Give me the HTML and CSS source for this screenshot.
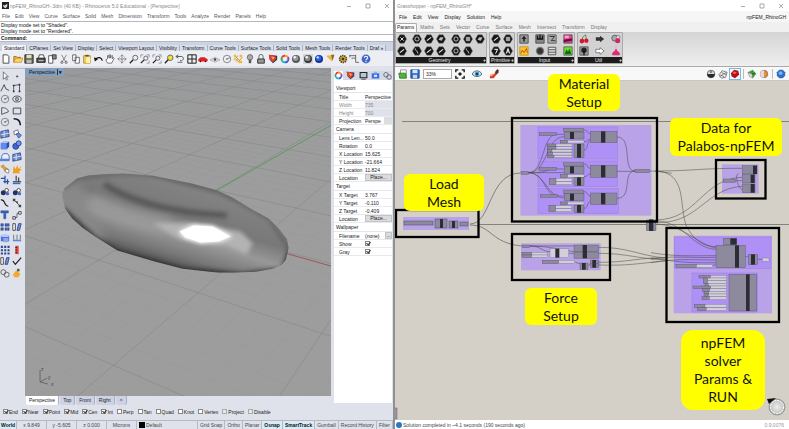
FILE: index.html
```html
<!DOCTYPE html>
<html lang="en">
<head>
<meta charset="utf-8">
<title>npFEM_RhinoGH</title>
<link rel="stylesheet" href="styles.css">
</head>
<body>
<svg class="defs" aria-hidden="true">
  <symbol id="new" viewBox="0 0 12 12"><path d="M2.500 1h5l2 2v8h-7z" fill="#fff" stroke="#333"/></symbol>
  <symbol id="open" viewBox="0 0 12 12"><path d="M1 10V3h3l1 1h4v2" fill="#f3c24a" stroke="#9a6a10"/><path d="M1 10l2-5h9l-2 5z" fill="#ffd45e" stroke="#a8761a" stroke-width=".7"/></symbol>
  <symbol id="save" viewBox="0 0 12 12"><path d="M1 1h10v10H1z" fill="#666b50" stroke="#222"/><path d="M3 1h6v4H3z" fill="#dfe2c0"/><path d="M3 7h6v4H3z" fill="#bbb"/></symbol>
  <symbol id="print" viewBox="0 0 12 12"><path d="M3 5l1-4h5l1 4" fill="#fff" stroke="#333"/><path d="M1 5h10v5H1z" fill="#555" stroke="#111"/><path d="M3 8h6" stroke="#ddd"/></symbol>
  <symbol id="props" viewBox="0 0 12 12"><path d="M2 2h5v9H2z" fill="#fff" stroke="#444"/><path d="M6 1h5v5H7z" fill="#888" stroke="#333"/></symbol>
  <symbol id="cut" viewBox="0 0 12 12"><path d="M3 1l5 8M9 1L4 9" stroke="#777" fill="none"/><circle cx="3.500" cy="10" r="1.300" fill="none" stroke="#555"/><circle cx="8.500" cy="10" r="1.300" fill="none" stroke="#555"/></symbol>
  <symbol id="copy" viewBox="0 0 12 12"><path d="M2 1h4v7H2zM5 4h5v7H5z" fill="#fff" stroke="#555"/></symbol>
  <symbol id="paste" viewBox="0 0 12 12"><path d="M2 2h8v9H2z" fill="#f6cf4a" stroke="#b08820"/><path d="M4 1h4v2H4z" fill="#555"/><path d="M5 4h5v7H5z" fill="#fff4b0"/></symbol>
  <symbol id="undo" viewBox="0 0 12 12"><path d="M2 6c3-3 7-2 8 2" stroke="#111" stroke-width="1.500" fill="none"/><path d="M0 4l1 5 4-3z" fill="#111"/></symbol>
  <symbol id="hand" viewBox="0 0 12 12"><path d="M3 11L1 7l2-1V2h1.500l.5 3V1h1.500v4L8 2h1l-.5 4L10 4l1 1-3 6z" fill="#fff" stroke="#444" stroke-width=".8"/></symbol>
  <symbol id="move" viewBox="0 0 12 12"><path d="M6 1v10M1 6h10M4 3l2-2 2 2M4 9l2 2 2-2M3 4L1 6l2 2M9 4l2 2-2 2" fill="none" stroke="#666" stroke-width=".8"/></symbol>
  <symbol id="zoom" viewBox="0 0 12 12"><circle cx="7.500" cy="4.500" r="3" fill="#eef" stroke="#555"/><path d="M5 7l-4 4" stroke="#222" stroke-width="1.600"/></symbol>
  <symbol id="zoomw" viewBox="0 0 12 12"><path d="M1 4V1h3M8 1h3v3M11 8v3H8" fill="none" stroke="#777" stroke-width=".8"/><circle cx="7" cy="5" r="2.500" fill="#eef" stroke="#555"/><path d="M5 7l-4 4" stroke="#222" stroke-width="1.500"/></symbol>
  <symbol id="zoomy" viewBox="0 0 12 12"><circle cx="7.500" cy="4.500" r="3.300" fill="#f5df3a" stroke="#555"/><path d="M5 7l-4 4" stroke="#222" stroke-width="1.600"/></symbol>
  <symbol id="back" viewBox="0 0 12 12"><path d="M2 3h6c4 1 2 6-2 5M4 1L1 3l3 2" fill="none" stroke="#444"/><path d="M3 10h6" stroke="#555"/></symbol>
  <symbol id="four" viewBox="0 0 12 12"><path d="M1 1h10v10H1zM6 1v10M1 6h10" fill="none" stroke="#222" stroke-width="1.200"/></symbol>
  <symbol id="car" viewBox="0 0 12 12"><path d="M0 7l3-3h5l4 3-1 2H1z" fill="#d8232a"/><circle cx="3" cy="9" r="1" fill="#500"/><circle cx="9" cy="9" r="1" fill="#500"/></symbol>
  <symbol id="cplane" viewBox="0 0 12 12"><path d="M0 7l6-3 6 3-6 3z" fill="#ddd" stroke="#888" stroke-width=".6"/><circle cx="6" cy="6.500" r="1.500" fill="#444"/></symbol>
  <symbol id="circ" viewBox="0 0 12 12"><circle cx="6" cy="6" r="4.500" fill="none" stroke="#777"/><circle cx="6" cy="6" r="1" fill="#555"/><path d="M6 6l4-2" stroke="#777"/></symbol>
  <symbol id="curves" viewBox="0 0 12 12"><path d="M2 2l8 8M1 7l5-5M6 10l5-6" stroke="#b5862a" fill="none"/><path d="M1 1h3v3H1zM8 1h3v3H8zM7 8h4v3H7zM3 6h3v3H3z" fill="#f5b63a"/></symbol>
  <symbol id="bulb" viewBox="0 0 12 12"><circle cx="6" cy="4" r="3.300" fill="#aaa" stroke="#666"/><path d="M4.500 7h3v4h-3z" fill="#555"/></symbol>
  <symbol id="lock" viewBox="0 0 12 12"><path d="M3.500 6V3a2.500 2.500 0 015 0v3" fill="none" stroke="#555"/><path d="M2 6h8v5H2z" fill="#999" stroke="#222"/></symbol>
  <symbol id="wedge" viewBox="0 0 12 12"><path d="M1 1l10 1v5L6 11 2 7z" fill="#343b52"/><path d="M1 1l7 1 2 3-4 5-4-4z" fill="#e2412b"/><path d="M4 3l4 1-2 3z" fill="#ffb06a"/></symbol>
  <symbol id="wheel" viewBox="0 0 12 12"><g fill="none" stroke-width="2.400"><path d="M6 2A4 4 0 019.500 4" stroke="#f4a11e"/><path d="M9.500 4A4 4 0 019.500 8" stroke="#9a3bc0"/><path d="M9.500 8A4 4 0 016 10" stroke="#2f5fe0"/><path d="M6 10A4 4 0 012.500 8" stroke="#24b8c8"/><path d="M2.500 8A4 4 0 012.500 4" stroke="#33b04a"/><path d="M2.500 4A4 4 0 016 2" stroke="#e83c3c"/></g></symbol>
  <symbol id="ball" viewBox="0 0 12 12"><circle cx="6" cy="6" r="4.800" fill="#555"/><circle cx="5.500" cy="5" r="3.300" fill="#999"/><circle cx="4.500" cy="4" r="1.500" fill="#eee"/></symbol>
  <symbol id="balld" viewBox="0 0 12 12"><path d="M0 0h12v12H0z" fill="#d2d4d8"/><circle cx="6" cy="6" r="4.800" fill="#333"/><circle cx="5.500" cy="5" r="3.500" fill="#888"/><circle cx="4.500" cy="4" r="1.500" fill="#f4f4f4"/></symbol>
  <symbol id="ballb" viewBox="0 0 12 12"><circle cx="6" cy="6" r="4.800" fill="#12309a"/><circle cx="5.500" cy="5" r="3.300" fill="#2f62d6"/><circle cx="4.500" cy="4" r="1.400" fill="#cfe0ff"/></symbol>
  <symbol id="cone" viewBox="0 0 12 12"><path d="M0 2l10-1-3 8z" fill="#f0b63a"/><path d="M6 1l4 0-2 7z" fill="#864"/></symbol>
  <symbol id="gear" viewBox="0 0 12 12"><circle cx="6" cy="6" r="4.200" fill="#c9a23c" stroke="#4c3c18" stroke-width="1.800" stroke-dasharray="1.600 1"/><circle cx="6" cy="6" r="1.600" fill="#3b3422"/></symbol>
  <symbol id="dims" viewBox="0 0 12 12"><path d="M1 2h7M1 1v3M8 1v9h4M3 5h5" fill="none" stroke="#555"/></symbol>
  <symbol id="help" viewBox="0 0 12 12"><circle cx="6" cy="6" r="5.300" fill="#3f66cf"/><path d="M4 4.500c0-2.500 4-2.500 4 0C8 6 6 6 6 7.500M6 8.500v1.300" fill="none" stroke="#fff" stroke-width="1.300"/></symbol>

  <symbol id="arrow" viewBox="0 0 12 12"><path d="M4 1v9l2-2 2 3 1-1-2-3h3z" fill="#fff" stroke="#444" stroke-width=".8"/></symbol>
  <symbol id="dot" viewBox="0 0 12 12"><path d="M5 5.500h2.500v2H5z" fill="#555"/></symbol>
  <symbol id="poly" viewBox="0 0 12 12"><path d="M1 10l4-8 2 5 4 2" fill="none" stroke="#333"/></symbol>
  <symbol id="ctrl" viewBox="0 0 12 12"><path d="M2 10V3l7-1v8" fill="none" stroke="#444"/><path d="M1 2h2v2H1zM8 1h2v2H8zM1 9h2v2H1zM8 9h2v2H8z" fill="#333"/></symbol>
  <symbol id="ell" viewBox="0 0 12 12"><ellipse cx="6" cy="6" rx="5" ry="3.600" fill="none" stroke="#444"/><path d="M4.500 4.500h3v3h-3z" fill="none" stroke="#444"/></symbol>
  <symbol id="arc" viewBox="0 0 12 12"><path d="M2 2c5 0 8 2 8 5L2 10z" fill="none" stroke="#444"/></symbol>
  <symbol id="rect" viewBox="0 0 12 12"><path d="M1.500 2.500h9v7h-9z" fill="none" stroke="#333"/></symbol>
  <symbol id="fillet" viewBox="0 0 12 12"><path d="M2 2c5 0 8 3 8 8" fill="none" stroke="#111" stroke-width="1.800"/></symbol>
  <symbol id="surf" viewBox="0 0 12 12"><path d="M1 3l9-2 1 8-10 2z" fill="#6d8ed2" stroke="#33447c"/><path d="M5 2v8M1 7l10-2" stroke="#e4ecff"/></symbol>
  <symbol id="surf2" viewBox="0 0 12 12"><path d="M2 3l5-2 1 4-5 2z" fill="#fff" stroke="#444" stroke-width=".8"/><path d="M5 6c3-2 6 0 6 2l-3 3z" fill="#6d8ed2" stroke="#33447c" stroke-width=".8"/></symbol>
  <symbol id="box" viewBox="0 0 12 12"><path d="M1 4l3-2h7v6l-3 3H1z" fill="#2c4fae"/><path d="M1 4h7v7H1z" fill="#5f8af0"/><path d="M1 4l3-2h7L8 4z" fill="#a9c3ff"/></symbol>
  <symbol id="balls" viewBox="0 0 12 12"><circle cx="4.500" cy="7.500" r="3.600" fill="#3c68d8" stroke="#223c84"/><circle cx="8" cy="4" r="3" fill="#6d94ee" stroke="#223c84"/></symbol>
  <symbol id="cage" viewBox="0 0 12 12"><path d="M2 5l2-3h5l2 3v5H2z" fill="#eaf0ff" stroke="#3d5db0"/><path d="M0 8h11v3H0z" fill="#5f82d6"/></symbol>
  <symbol id="orange" viewBox="0 0 12 12"><path d="M1 3l3-2 2 3 4 2-1 4-3-1-2-4z" fill="#f0a628" stroke="#8a6a2a" stroke-width=".6"/><path d="M7 6l4 1-1 4-4-2z" fill="#fff" stroke="#555" stroke-width=".7"/></symbol>
  <symbol id="burst" viewBox="0 0 12 12"><path d="M1 11l1-9 2 4 3-5v5l5-4-3 4 3 1-4 2 2 2z" fill="#f49c1c"/></symbol>
  <symbol id="trim" viewBox="0 0 12 12"><path d="M1 4h5M6 1v9M4 8h7M9 5v6" fill="none" stroke="#2b4ea8" stroke-width="1.500"/></symbol>
  <symbol id="split" viewBox="0 0 12 12"><path d="M5 1v6M1 8h10M8 3v5" fill="none" stroke="#333" stroke-width="1.300"/><path d="M1 9h9v2H1z" fill="#426acb"/></symbol>
  <symbol id="circs" viewBox="0 0 12 12"><circle cx="4" cy="7" r="3" fill="#26325e"/><circle cx="8" cy="4" r="2.200" fill="#fff" stroke="#333"/><circle cx="9" cy="8" r="2" fill="#4668c8"/></symbol>
  <symbol id="crv" viewBox="0 0 12 12"><path d="M1 2c7 0 2 7 9 8" fill="none" stroke="#111" stroke-width="1.300"/></symbol>
  <symbol id="link" viewBox="0 0 12 12"><path d="M2 2l8 8" stroke="#444"/><path d="M1 1h3v3H1zM8 8h3v3H8zM5 4h2v2H5z" fill="#444"/></symbol>
  <symbol id="tee" viewBox="0 0 12 12"><path d="M1 1h9v2.500H7v7H4.500v-7H1z" fill="#3d63c8" stroke="#20356e" stroke-width=".5"/></symbol>
  <symbol id="pts" viewBox="0 0 12 12"><path d="M2 9h4V4h4" fill="none" stroke="#555"/><path d="M1 8h3v3H1zM8 2h3v3H8z" fill="#fff" stroke="#333"/></symbol>
  <symbol id="arr" viewBox="0 0 12 12"><path d="M1 2h3v3H1zM1 7h3v3H1zM6 2h5v3H6zM6 7h2v3H6zM9 7h2v3H9z" fill="#4267c4" stroke="#1d2c5c" stroke-width=".5"/></symbol>
  <symbol id="mir" viewBox="0 0 12 12"><path d="M1 2h3v8H1z" fill="#fff" stroke="#333"/><path d="M6 10l2-8h3l-2 8z" fill="#6f93e8" stroke="#26407c"/></symbol>
  <symbol id="cyl" viewBox="0 0 12 12"><path d="M1 3h10v7H1z" fill="#4a74dc"/><ellipse cx="6" cy="3" rx="5" ry="1.800" fill="#b6caff"/><path d="M4 6h6v5H4z" fill="#8ba8ec"/></symbol>
  <symbol id="ups" viewBox="0 0 12 12"><path d="M2 8V2M6 8V2M10 8V2" stroke="#666"/><path d="M1 8h10v2H1z" fill="#5f88e0"/></symbol>
  <symbol id="grid9" viewBox="0 0 12 12"><path d="M1 1h2.500v2.500H1zM5 1h2.500v2.500H5zM9 1h2.500v2.500H9zM1 5h2.500v2.500H1zM5 5h2.500v2.500H5zM9 5h2.500v2.500H9zM1 9h2.500v2.500H1zM5 9h2.500v2.500H5zM9 9h2.500v2.500H9z" fill="#2c4690"/></symbol>
  <symbol id="meas" viewBox="0 0 12 12"><path d="M4 1h4v10H4z" fill="#d44"/><path d="M4 3h2M4 6h2M4 9h2" stroke="#222"/></symbol>
  <symbol id="check" viewBox="0 0 12 12"><path d="M1 6l3 4 7-8" fill="none" stroke="#222" stroke-width="1.500"/></symbol>
  <symbol id="gears" viewBox="0 0 12 12"><circle cx="4" cy="5" r="3" fill="none" stroke="#555"/><circle cx="8" cy="8" r="3" fill="none" stroke="#555"/></symbol>
  <symbol id="lampy" viewBox="0 0 12 12"><path d="M1 8l4-5 5 4-2 4H3z" fill="#f2a92c"/><path d="M6 1h3v3H6z" fill="#555"/></symbol>

  <symbol id="hex" viewBox="0 0 12 12"><path d="M3.500 1h5L11.500 6l-3 5h-5L.5 6z" fill="#161616" stroke="#666" stroke-width=".5"/></symbol>
  <symbol id="hx" viewBox="0 0 12 12"><use href="#hex"/><path d="M4 4l4 4M8 4L4 8" stroke="#fff"/></symbol>
  <symbol id="hcirc" viewBox="0 0 12 12"><use href="#hex"/><circle cx="6" cy="6" r="2.500" fill="none" stroke="#ddd"/></symbol>
  <symbol id="hplane" viewBox="0 0 12 12"><use href="#hex"/><path d="M3 7l2-3h4L7 8z" fill="#bbb"/></symbol>
  <symbol id="hbox" viewBox="0 0 12 12"><use href="#hex"/><path d="M4 4h4v4H4zM6 4v4M4 6h4" fill="#555" stroke="#ddd" stroke-width=".8"/></symbol>
  <symbol id="hline" viewBox="0 0 12 12"><use href="#hex"/><path d="M3.500 8l5-4" stroke="#eee" stroke-width="1.400"/></symbol>
  <symbol id="hcurve" viewBox="0 0 12 12"><use href="#hex"/><path d="M4 3c0 4 2 1 3 6" fill="none" stroke="#eee"/></symbol>
  <symbol id="hseven" viewBox="0 0 12 12"><use href="#hex"/><path d="M4 4h4L5.500 9" fill="none" stroke="#fff" stroke-width="1.200"/></symbol>
  <symbol id="ha" viewBox="0 0 12 12"><use href="#hex"/><path d="M4 9l2-6 2 6M5 7h2" fill="none" stroke="#fff" stroke-width="1.200"/></symbol>
  <symbol id="up" viewBox="0 0 12 12"><path d="M1 1h10v10H1z" fill="#999" stroke="#444"/><path d="M6 2l3 4H7v3H5V6H3z" fill="#222"/></symbol>
  <symbol id="disk" viewBox="0 0 12 12"><path d="M1 1h10v10H1z" fill="#888" stroke="#444"/><path d="M3 2v4h6V2M6 1v4" fill="none" stroke="#111" stroke-width="1.600"/></symbol>
  <symbol id="slid" viewBox="0 0 12 12"><path d="M1 1h10v10H1z" fill="#aaa" stroke="#555"/><path d="M3 3h6L5 8h5" fill="none" stroke="#222"/></symbol>
  <symbol id="pink" viewBox="0 0 12 12"><path d="M1 1h10v10H1z" fill="#e9408f" stroke="#555"/><path d="M1 7l10-2v3L1 10z" fill="#6a1040"/><path d="M2 2h5v3H2z" fill="#f9a4cc"/></symbol>
  <symbol id="graph" viewBox="0 0 12 12"><path d="M1 1h10v10H1z" fill="#f8c62c" stroke="#c89010"/><path d="M2 9l2-4 2 3 3-5 1 5" fill="none" stroke="#c03a10"/></symbol>
  <symbol id="blob" viewBox="0 0 12 12"><circle cx="6" cy="6" r="5" fill="#777"/><circle cx="6" cy="6" r="3.500" fill="#333"/></symbol>
  <symbol id="list" viewBox="0 0 12 12"><path d="M1.500 1.500h9v9h-9zM2 4.500h8M2 7.500h8" fill="#ddd" stroke="#444"/></symbol>
  <symbol id="green" viewBox="0 0 12 12"><path d="M1 1h10v10H1z" fill="#6ee02c" stroke="#555"/><path d="M2 10l2-6 2 3 2-4 2 7z" fill="#0e6a1a"/></symbol>
  <symbol id="cherry" viewBox="0 0 12 12"><path d="M4 7c0-4 2-5 4-6 0 3 1 4 1 6" fill="none" stroke="#2a8a2a"/><circle cx="3.500" cy="8.500" r="2.800" fill="#dc1030"/><circle cx="8.800" cy="8" r="2.600" fill="#dc1030"/></symbol>
  <symbol id="tree" viewBox="0 0 12 12"><path d="M1 1h10v10H1z" fill="#999" stroke="#555"/><circle cx="6" cy="5" r="3.300" fill="#222"/><path d="M6 5v6" stroke="#111" stroke-width="1.500"/></symbol>
  <symbol id="arf" viewBox="0 0 12 12"><path d="M1 4h5V2l5 4-5 4V8H1z" fill="#333"/></symbol>
  <symbol id="aro" viewBox="0 0 12 12"><path d="M1 4h5V2l5 4-5 4V8H1z" fill="#fff" stroke="#555" stroke-width=".8"/></symbol>
  <symbol id="magb" viewBox="0 0 12 12"><circle cx="4.500" cy="5" r="3.600" fill="#aaa" stroke="#555"/><circle cx="8.500" cy="4" r="2.300" fill="#ddd" stroke="#777"/><circle cx="8" cy="8" r="3" fill="#d8206a"/></symbol>
  <symbol id="flask" viewBox="0 0 12 12"><path d="M5 1h2v4l4 4-1 2H2L1 9l4-4z" fill="#e0287a"/><path d="M5 1h2v3H5z" fill="#f7c6dc"/></symbol>

  <symbol id="gopen" viewBox="0 0 12 12"><path d="M3 1h7v9H3z" fill="#fff" stroke="#888"/><path d="M1 5h8l1 6H2z" fill="#4fb53c" stroke="#2a7a22"/></symbol>
  <symbol id="gsave" viewBox="0 0 12 12"><path d="M1 1h10v10H1z" fill="#2d6fd0" stroke="#1a3f8c"/><path d="M3 1h6v4H3z" fill="#d5e6ff"/><path d="M3.500 7h5v4h-5z" fill="#cfd6e0"/></symbol>
  <symbol id="focus" viewBox="0 0 12 12"><path d="M1 4V1h3M8 1h3v3M11 8v3H8M4 11H1V8" fill="none" stroke="#111" stroke-width="1.600"/><path d="M6 3.500L8.500 6 6 8.500 3.500 6z" fill="#222"/></symbol>
  <symbol id="eye" viewBox="0 0 12 12"><path d="M0 6c3-5 9-5 12 0-3 4-9 4-12 0z" fill="#cfe4f0" stroke="#2c5468"/><circle cx="6" cy="6" r="2.600" fill="#3f90b8"/><circle cx="6" cy="6" r="1.200" fill="#0c2430"/></symbol>
  <symbol id="pen" viewBox="0 0 12 12"><path d="M1 11c0-4 2-4 4-4l5-5 2 2-5 5c-1 3-4 2-6 2z" fill="#d83a26"/><path d="M7 4l3-4 2 2-3 4z" fill="#3a3a3a"/><path d="M1 7l3-2 1 2-2 2z" fill="#f0b0a0"/></symbol>
  <symbol id="half" viewBox="0 0 12 12"><circle cx="6" cy="6" r="4.500" fill="#ddd" stroke="#555"/><path d="M1.500 6h9a4.500 4.500 0 01-9 0z" fill="#2c2c2c"/><circle cx="6" cy="3.500" r="1.500" fill="#888"/></symbol>
  <symbol id="wire" viewBox="0 0 12 12"><path d="M1 7l4-5 6 2-2 6-5 1zM4 4l6 3M3 7l5 3M2 9l8-5" fill="#eee" stroke="#555" stroke-width=".8"/></symbol>
  <symbol id="red" viewBox="0 0 12 12"><path d="M1 5l4-4 5 1 1 5-5 4-4-2z" fill="#b51313"/><path d="M3 5l2-2 3 1-2 2z" fill="#f26a5a"/></symbol>
  <symbol id="gball" viewBox="0 0 12 12"><path d="M1 4l6-3 4 5-4 5z" fill="#43a03a"/><path d="M1 4l5 2 1 5-4-2z" fill="#dcdcdc" stroke="#555" stroke-width=".5"/><path d="M6 6l4-1" stroke="#174a14"/></symbol>
  <symbol id="oball" viewBox="0 0 12 12"><circle cx="6" cy="6" r="4.500" fill="#f08a34" stroke="#555" stroke-width=".7"/><path d="M6 1.500a4.500 4.500 0 000 9z" fill="#ddd"/></symbol>
  <symbol id="bbox" viewBox="0 0 12 12"><path d="M4 1h4l3 3v4l-3 3H4L1 8V4z" fill="#2f6fc4"/><path d="M4 3h3l1 2-1 2H4L3 5z" fill="#7db4f0"/></symbol>
  <symbol id="screen" viewBox="0 0 12 12"><path d="M1.500 2h9v7h-9z" fill="#b8c6d0" stroke="#222" stroke-width="1.400"/><path d="M3 11h6" stroke="#333"/></symbol>
  <symbol id="bag" viewBox="0 0 12 12"><path d="M1 3h10v7H1z" fill="#3f6fe0"/><path d="M4 1h4v2H4z" fill="#89a9f0"/><path d="M4 5h4v3H4z" fill="#d6e2ff"/></symbol>
</svg>

<main class="desktop">
  <section class="win rhino" aria-label="Rhinoceros">
    <header class="title">
      <svg class="logo" viewBox="0 0 8 8"><path d="M0 0h8v8H0z" fill="#222"/><path d="M1 3l2 1 3-2v3L4 7 2 6z" fill="#ddd"/></svg>
      <span>npFEM_RhinoGH-.3dm (40 KB) - Rhinoceros 5.0 Educational - [Perspective]</span>
      <div class="sys"><button aria-label="Minimize"><svg viewBox="0 0 6 6"><path d="M1 3.500h4"/></svg></button><button aria-label="Maximize"><svg viewBox="0 0 6 6"><path d="M1 1h4v4H1z"/></svg></button><button aria-label="Close"><svg viewBox="0 0 6 6"><path d="M1 1l4 4M5 1L1 5"/></svg></button></div>
    </header>
    <nav class="menu"><a href="#">File</a><a href="#">Edit</a><a href="#">View</a><a href="#">Curve</a><a href="#">Surface</a><a href="#">Solid</a><a href="#">Mesh</a><a href="#">Dimension</a><a href="#">Transform</a><a href="#">Tools</a><a href="#">Analyze</a><a href="#">Render</a><a href="#">Panels</a><a href="#">Help</a></nav>
    <div class="history"><p>Display mode set to "Shaded".</p><p>Display mode set to "Rendered".</p></div>
    <div class="command"><label for="cmd">Command:</label><input id="cmd" type="text"></div>
    <nav class="tabs"><a href="#" class="on">Standard</a><a href="#">CPlanes</a><a href="#">Set View</a><a href="#">Display</a><a href="#">Select</a><a href="#">Viewport Layout</a><a href="#">Visibility</a><a href="#">Transform</a><a href="#">Curve Tools</a><a href="#">Surface Tools</a><a href="#">Solid Tools</a><a href="#">Mesh Tools</a><a href="#">Render Tools</a><a href="#">Draf »</a></nav>
    <div class="bar" data-icons="new open save print props cut copy paste undo hand move zoom zoomw zoomw zoomy back four car cplane circ curves bulb lock wedge wheel ball balld ballb cone gear dims help"></div>
    <div class="work">
      <div class="side" data-icons="arrow dot poly ctrl circ ell arc rect circ fillet surf surf2 box balls cage surf orange burst trim split circs circs crv link tee pts arr mir cyl ups grid9 meas mir check gears lampy"></div>
      <div class="center">
        <div class="viewport">
          <svg class="scene" viewBox="25 68 305 328" preserveAspectRatio="xMinYMin slice">
            <defs>
              <linearGradient id="body" gradientUnits="userSpaceOnUse" x1="190" y1="178" x2="163" y2="268"><stop offset="0" stop-color="#707070"/><stop offset=".12" stop-color="#828282"/><stop offset=".42" stop-color="#787878"/><stop offset=".62" stop-color="#989898"/><stop offset=".82" stop-color="#777"/><stop offset="1" stop-color="#444"/></linearGradient>
              <filter id="b2" x="-50%" y="-50%" width="200%" height="200%"><feGaussianBlur stdDeviation="2"/></filter>
              <filter id="b5" x="-50%" y="-50%" width="200%" height="200%"><feGaussianBlur stdDeviation="5"/></filter>
              <clipPath id="shape"><path id="hull" d="M62 195L64 188 77 178 88 175 100 174 123 173 153 175.500 192 183 217 190 232 197 250 208 268 218 278 228 286 238 288 247 285 259 281 264 272 268 255 271 235 272 218 272 200 270 182 268 155 261 117 250 106 243 95 236 82 227 72 218 65 208z"/></clipPath>
            </defs>
            <g id="gridlines"></g>
            <path d="M216 190L332 124" stroke="#4b9b4b" stroke-width=".8"/><path d="M286 253L332 266" stroke="#a04444" stroke-width=".8"/>
            <g clip-path="url(#shape)">
              <use href="#hull" fill="url(#body)"/>
              <path d="M58 180l20 0 8 20 20 40-12 10-36-40z" fill="#888" filter="url(#b5)"/>
              <path d="M104 184C120 194 150 208 200 213l26 2" fill="none" stroke="#505050" stroke-width="6" opacity=".8" filter="url(#b2)"/>
              <path d="M90 200C120 215 140 222 170 224" fill="none" stroke="#9a9a9a" stroke-width="12" filter="url(#b5)"/>
              <path d="M152 223l36-1 52 9 12 12-6 11-20-8-48-8z" fill="#b8b8b8" opacity=".9" filter="url(#b2)"/>
              <path d="M178 231l15-7 19 1 20 11-12 5-20 2-16-5z" fill="#fff" filter="url(#b2)"/>
              <path d="M179 231l14-6 19 1 18 10-12 5-18 1-15-5z" fill="#fff"/>
              <path d="M62 208l33 30 22 13 65 18 60 5 40-5 8-20" fill="none" stroke="#2c2c2c" stroke-width="4" filter="url(#b2)"/>
              <path d="M64 188l13-10 46-5 30 2 64 15 51 28 20 30" fill="none" stroke="#444" stroke-width="1.500" filter="url(#b2)"/>
            </g>
            <g fill="none" stroke="#555" stroke-width=".7"><path d="M40 381v-12M40 381l7-4M40 381l8 2"/></g>
            <g class="axis"><text x="41" y="370">z</text><text x="48" y="378">y</text><text x="51" y="385">x</text></g>
          </svg>
          <button class="vpname">Perspective <b>▾</b></button>
        </div>
        <nav class="vptabs"><a href="#" class="on">Perspective</a><a href="#">Top</a><a href="#">Front</a><a href="#">Right</a><a href="#">✧</a></nav>
      </div>
      <form class="panel">
        <div class="ptabs" data-icons="wheel wedge screen bag gears"></div>
        <div class="pbody">
          <h2>Viewport</h2>
          <div class="row"><label for="f1">Title</label><input id="f1" value="Perspective"></div>
          <div class="row off"><label for="f2">Width</label><input id="f2" value="735" disabled></div>
          <div class="row off"><label for="f3">Height</label><input id="f3" value="700" disabled></div>
          <div class="row"><label for="f4">Projection</label><select id="f4"><option>Perspe</option></select></div>
          <h2>Camera</h2>
          <div class="row"><label for="f5">Lens Len...</label><input id="f5" value="50.0"></div>
          <div class="row"><label for="f6">Rotation</label><input id="f6" value="0.0"></div>
          <div class="row"><label for="f7">X Location</label><input id="f7" value="15.625"></div>
          <div class="row"><label for="f8">Y Location</label><input id="f8" value="-21.664"></div>
          <div class="row"><label for="f9">Z Location</label><input id="f9" value="11.824"></div>
          <div class="row"><span>Location</span><button type="button">Place...</button></div>
          <h2>Target</h2>
          <div class="row"><label for="f10">X Target</label><input id="f10" value="3.767"></div>
          <div class="row"><label for="f11">Y Target</label><input id="f11" value="-0.110"></div>
          <div class="row"><label for="f12">Z Target</label><input id="f12" value="-0.409"></div>
          <div class="row"><span>Location</span><button type="button">Place...</button></div>
          <h2>Wallpaper</h2>
          <div class="row file"><label for="f13">Filename</label><input id="f13" value="(none)"><button type="button">...</button></div>
          <div class="row"><label for="f14">Show</label><input id="f14" type="checkbox" checked></div>
          <div class="row"><label for="f15">Gray</label><input id="f15" type="checkbox" checked></div>
        </div>
      </form>
    </div>
    <div class="osnap">
      <label><input type="checkbox" checked>End</label><label><input type="checkbox" checked>Near</label><label><input type="checkbox" checked>Point</label><label><input type="checkbox" checked>Mid</label><label><input type="checkbox" checked>Cen</label><label><input type="checkbox" checked>Int</label><label><input type="checkbox">Perp</label><label><input type="checkbox">Tan</label><label><input type="checkbox">Quad</label><label><input type="checkbox">Knot</label><label><input type="checkbox">Vertex</label><label><input type="checkbox" disabled>Project</label><label><input type="checkbox" disabled>Disable</label>
    </div>
    <footer class="status">
      <span class="world">World</span><span class="coord">x 9.849</span><span class="coord">y -5.605</span><span class="coord">z 0.000</span><span class="coord">Microns</span><span class="layer"><i></i>Default</span>
      <button>Grid Snap</button><button>Ortho</button><button>Planar</button><button class="on">Osnap</button><button class="on">SmartTrack</button><button>Gumball</button><button>Record History</button><button>Filter</button>
    </footer>
  </section>

  <section class="win gh" aria-label="Grasshopper">
    <header class="title">
      <span>Grasshopper - npFEM_RhinoGH*</span>
      <div class="sys"><button aria-label="Minimize"><svg viewBox="0 0 6 6"><path d="M1 3.500h4"/></svg></button><button aria-label="Maximize"><svg viewBox="0 0 6 6"><path d="M1 1h4v4H1z"/></svg></button><button aria-label="Close"><svg viewBox="0 0 6 6"><path d="M1 1l4 4M5 1L1 5"/></svg></button></div>
    </header>
    <nav class="menu"><a href="#">File</a><a href="#">Edit</a><a href="#">View</a><a href="#">Display</a><a href="#">Solution</a><a href="#">Help</a><span>npFEM_RhinoGH</span></nav>
    <nav class="gtabs"><a href="#" class="on">Params</a><a href="#">Maths</a><a href="#">Sets</a><a href="#">Vector</a><a href="#">Curve</a><a href="#">Surface</a><a href="#">Mesh</a><a href="#">Intersect</a><a href="#">Transform</a><a href="#">Display</a></nav>
    <div class="ribbon">
      <div class="group"><div class="sets"><div data-icons="hx hline"></div><div data-icons="hcirc hcurve hline hline hplane hline"></div><div data-icons="hcirc hcirc hbox hcurve hplane"></div></div><h2><span>Geometry</span><b>+</b></h2></div>
      <div class="group"><div class="sets"><div data-icons="hline hseven hbox ha"></div></div><h2><span>Primitive</span><b>+</b></h2></div>
      <div class="group wide"><div class="sets"><div data-icons="up graph"></div><div data-icons="disk blob slid list"></div><div data-icons="pink green"></div></div><h2><span>Input</span><b>+</b></h2></div>
      <div class="group wide"><div class="sets"><div data-icons="cherry tree"></div><div data-icons="arf aro"></div><div data-icons="magb flask"></div></div><h2><span>Util</span><b>+</b></h2></div>
    </div>
    <div class="gbar">
      <div data-icons="gopen gsave"></div>
      <select aria-label="Zoom"><option>33%</option></select>
      <div class="drop" data-icons="focus eye pen"></div>
      <div class="right" data-icons="half wire red"></div>
      <div class="cut" data-icons="gball oball"></div>
      <div class="cut" data-icons="bbox"></div>
    </div>
    <div class="canvas">
      <svg class="graph" viewBox="395 81 394 338" preserveAspectRatio="xMinYMin meet">
        <g class="wire">
          <path d="M402 121.500H789M479 224.500H789M470 224C492 224 488 173 521 173M470 225C492 225 490 243 522 246"/>
        </g>
        <g>
          <rect class="g1" x="403" y="217" width="66" height="13"/>
          <g class="fine"><rect class="n" x="404" y="221" width="29" height="4"/><rect class="n" x="435" y="219" width="12" height="9"/><rect class="d" x="440" y="219" width="3" height="9"/><rect class="n" x="449" y="221" width="9" height="7"/><rect class="d" x="452" y="221" width="3" height="7"/><rect class="n" x="460" y="222" width="8" height="4"/></g>
        </g>
        <g transform="translate(505 110) scale(.33333)">
          <rect class="g1" x="46" y="45" width="393" height="272"/>
          <rect class="g2" x="99" y="51" width="239" height="96"/><rect class="g2" x="99" y="153" width="239" height="77"/><rect class="g2" x="99" y="235" width="241" height="76"/>
          <g class="wire w3"><path d="M70 188C120 188 110 73 155 73M70 188C130 190 120 177 155 177M70 188C120 188 120 258 155 258M70 188C130 188 120 80 178 80M70 188H178M70 188C120 188 125 262 178 264M155 73H178M155 177H178M155 258H178M237 60C250 60 245 70 256 72M237 95C250 95 245 88 256 88M237 120C250 120 245 92 256 92M237 162C250 162 245 175 256 175M237 200C250 200 245 192 256 192M237 245C250 245 245 258 256 258M237 295C250 295 245 275 256 275M336 81C385 81 350 183 390 183M336 184H390M336 265C385 265 350 183 390 183M434 183C460 184 460 184 500 190"/></g>
          <rect class="n" x="48" y="184" width="22" height="9"/><rect class="n" x="103" y="68" width="52" height="9"/><rect class="n" x="103" y="172" width="52" height="9"/><rect class="n" x="106" y="254" width="52" height="8"/><rect class="n" x="390" y="178" width="44" height="10"/>
          <g id="rowA"><rect class="n" x="176" y="55" width="60" height="10"/><rect class="n" x="178" y="66" width="59" height="21"/><rect class="d" x="195" y="66" width="12" height="21"/><rect class="l" x="166" y="91" width="71" height="8"/><rect class="n" x="166" y="91" width="22" height="8"/></g>
          <use href="#rowA" y="103"/><use href="#rowA" y="185"/>
          <g class="l"><rect x="127" y="102" width="74" height="7"/><rect x="127" y="110" width="74" height="7"/><rect x="127" y="119" width="74" height="7"/><rect x="127" y="128" width="74" height="7"/><rect x="127" y="136" width="74" height="7"/><rect x="133" y="205" width="68" height="9"/><rect x="133" y="215" width="68" height="9"/><rect x="132" y="287" width="68" height="8"/><rect x="132" y="296" width="68" height="9"/></g>
          <g class="n"><rect x="127" y="102" width="26" height="7"/><rect x="127" y="110" width="26" height="7"/><rect x="127" y="119" width="14" height="7"/><rect x="127" y="128" width="16" height="7"/><rect x="127" y="136" width="20" height="7"/><rect x="133" y="205" width="20" height="19"/><rect x="132" y="287" width="20" height="18"/></g>
          <g class="n"><rect x="207" y="102" width="30" height="41"/><rect x="207" y="202" width="30" height="25"/><rect x="207" y="285" width="30" height="23"/><rect x="256" y="64" width="80" height="34"/><rect x="256" y="166" width="80" height="36"/><rect x="256" y="249" width="80" height="34"/></g>
          <g class="d"><rect x="216" y="102" width="12" height="41"/><rect x="216" y="202" width="12" height="25"/><rect x="216" y="285" width="12" height="23"/><rect x="288" y="64" width="13" height="34"/><rect x="288" y="166" width="13" height="36"/><rect x="288" y="249" width="13" height="34"/></g>
          <rect class="n" x="424" y="330" width="29" height="32"/><rect class="d" x="432" y="328" width="13" height="35"/>
          <rect class="g1" x="48" y="400" width="239" height="81"/>
          <g class="wire w3"><path d="M74 408H207M74 408C110 408 110 425 135 425M74 408C120 408 150 415 207 425M190 430H207M209 456L226 462M250 468L256 460M281 412C370 412 400 436 480 444M281 430C370 430 400 448 480 448M281 457C370 457 400 443 480 443M281 465C370 468 400 460 480 453"/></g>
          <rect class="n" x="51" y="405" width="23" height="8"/><rect class="l" x="51" y="427" width="77" height="15"/><rect class="n" x="51" y="427" width="29" height="15"/><path class="line" d="M51 434.500h77"/>
          <rect class="l" x="135" y="416" width="56" height="27"/><rect class="d" x="151" y="416" width="12" height="27"/>
          <rect class="n" x="207" y="405" width="74" height="20"/><rect class="n" x="207" y="426" width="74" height="19"/><rect class="d" x="233" y="405" width="13" height="40"/>
          <rect class="l" x="113" y="451" width="96" height="9"/><rect class="n" x="113" y="451" width="48" height="9"/><rect class="n" x="225" y="459" width="24" height="20"/><rect class="d" x="231" y="459" width="11" height="20"/><rect class="n" x="256" y="450" width="25" height="23"/><rect class="d" x="262" y="450" width="11" height="23"/><path class="line" d="M256 461h25"/>
        </g>
        <g transform="translate(655 110) scale(.33333)">
          <rect class="g1" x="201" y="163" width="110" height="88"/>
          <rect class="g1" x="56" y="377" width="295" height="233"/><rect class="g2" x="58" y="381" width="290" height="94"/><rect class="g2" x="111" y="489" width="197" height="117"/>
          <g class="wire w3"><path d="M0 183C110 183 150 174 262 175M0 183C100 185 70 290 95 350C120 395 150 410 183 410M0 330C130 330 140 205 262 202M0 337C130 345 150 235 262 229M0 332C90 335 110 415 183 418M0 342C90 345 120 400 183 414M-12 428C60 440 100 437 183 437M-12 448C60 435 100 445 183 442M-12 458C60 445 100 450 183 450M-12 444C60 455 100 460 183 458M172 468L183 462M242 212H262M250 190C235 200 255 240 262 240M271 440H280M308 448H322"/></g>
          <rect class="n" x="262" y="167" width="44" height="25"/><rect class="d" x="294" y="167" width="12" height="25"/><rect class="n" x="262" y="194" width="38" height="25"/><rect class="d" x="287" y="194" width="12" height="25"/><rect class="n" x="262" y="222" width="38" height="26"/><rect class="d" x="287" y="222" width="12" height="26"/><rect class="n" x="205" y="207" width="37" height="10"/>
          <rect class="n" x="205" y="385" width="40" height="19"/><rect class="d" x="226" y="385" width="19" height="19"/><rect class="n" x="183" y="406" width="88" height="67"/><rect class="d" x="240" y="406" width="12" height="67"/><rect class="l" x="63" y="464" width="110" height="8"/><rect class="n" x="63" y="464" width="61" height="8"/><rect class="n" x="280" y="433" width="28" height="31"/><rect class="d" x="288" y="433" width="12" height="31"/><rect class="l" x="322" y="444" width="20" height="10"/>
          <rect class="n" x="222" y="493" width="83" height="110"/><rect class="d" x="273" y="493" width="11" height="110"/>
          <g class="l"><rect x="145" y="496" width="70" height="8"/><rect x="148" y="504" width="67" height="8"/><rect x="148" y="512" width="67" height="8"/><rect x="155" y="520" width="60" height="8"/><rect x="140" y="528" width="75" height="8"/><rect x="155" y="536" width="60" height="8"/><rect x="160" y="544" width="55" height="8"/><rect x="160" y="552" width="55" height="8"/><rect x="155" y="560" width="60" height="9"/><rect x="136" y="583" width="79" height="9"/><rect x="140" y="593" width="75" height="9"/></g>
          <g class="n"><rect x="132" y="496" width="34" height="8"/><rect x="145" y="504" width="13" height="16"/><rect x="150" y="520" width="10" height="8"/><rect x="114" y="528" width="53" height="8"/><rect x="142" y="536" width="22" height="8"/><rect x="147" y="544" width="14" height="8"/><rect x="147" y="552" width="12" height="8"/><rect x="141" y="560" width="22" height="9"/><rect x="118" y="583" width="32" height="9"/><rect x="127" y="593" width="27" height="9"/></g>
        </g>
        <g fill="none" stroke="#000" stroke-width="2.300">
          <rect x="396" y="210" width="82.500" height="27"/><rect x="512" y="118" width="145" height="103.500"/><rect x="512" y="234" width="98" height="46"/><rect x="716" y="160" width="49.500" height="38.500"/><rect x="666.500" y="228" width="112.500" height="94"/>
        </g>
        <radialGradient id="dial"><stop offset="0" stop-color="#eee"/><stop offset="1" stop-color="#bbb"/></radialGradient>
        <circle cx="777" cy="407" r="8" fill="url(#dial)" stroke="#888" stroke-width=".8"/><circle cx="777" cy="407" r="6.500" fill="none" stroke="#fff" stroke-dasharray="2 1"/><path d="M767 399l9-1-6 5-1 1z" fill="#111"/>
        <rect x="394" y="408" width="3" height="11" fill="#999" stroke="#666" stroke-width=".5"/>
      </svg>
      <p class="note material">Material Setup</p>
      <p class="note data">Data for<br>Palabos-npFEM</p>
      <p class="note load">Load Mesh</p>
      <p class="note force">Force Setup</p>
      <p class="note solver">npFEM solver Params &amp; RUN</p>
    </div>
    <footer class="gstatus"><i></i><span>Solution completed in ~4.1 seconds (190 seconds ago)</span><em>0.9.0076</em></footer>
  </section>
</main>
<script src="script.js"></script>
</body>
</html>
```
FILE: styles.css
```css
* { box-sizing: border-box; margin: 0; padding: 0; }
body { font: 5px/6px "Liberation Sans", Arial, sans-serif; color: #222; background: #fff; }
a { color: inherit; text-decoration: none; }
button, input, select { font: inherit; color: inherit; border: 0; background: none; border-radius: 0; appearance: none; min-width: 0; }
h2 { font: inherit; }
.defs { position: absolute; width: 0; height: 0; }
.desktop { display: grid; grid-template-columns: 393fr 396fr; min-height: 100vh; }
.win { display: flex; flex-direction: column; min-width: 0; overflow: hidden; white-space: nowrap; }
.icon { display: block; width: 10px; height: 10px; }
.icon svg { display: block; width: 100%; height: 100%; }

.title { display: flex; align-items: center; height: 11px; padding: 0 3px 0 2px; gap: 1px; color: #888; background: #fff; }
.logo { width: 7px; height: 7px; }
.sys { display: flex; gap: 13px; margin-left: auto; }
.sys svg { display: block; width: 6px; height: 6px; fill: none; stroke: #888; stroke-width: .7; }
.menu { display: flex; align-items: center; gap: 5px; height: 10px; padding: 0 2px; color: #555; background: #fff; }

.rhino { background: #dfe2ea; }
.history { height: 13px; padding: 0 1px; border-top: 1px solid #b4b8c2; background: #fff; color: #111; }
.command { display: flex; height: 8px; padding: 0 1px; border: 1px solid #b4b8c2; border-width: 1px 0; background: #fff; color: #111; font-weight: bold; }
.command input { flex: 1; }
.tabs { display: flex; height: 9px; padding: 3px 0 0 2px; background: #ccd3e2; }
.tabs a { padding: 0 2px; border-right: 1px solid #aab2c6; background: #d8deea; }
.tabs .on { background: #f2f4f8; }
.bar { display: flex; align-items: center; justify-content: space-between; height: 15px; padding: 0 22px 0 1px; background: #eceef3; }
.work { display: flex; flex: 1; padding-top: 2px; min-height: 0; }
.side { display: grid; grid-template-columns: 10px 10px; column-gap: 2px; align-content: space-between; width: 25px; height: 210px; padding-top: 2px; border-top: 1px solid #b6bac6; }
.center { display: flex; flex-direction: column; flex: 1; min-width: 0; }
.viewport { position: relative; flex: 1; min-height: 0; background: #9d9d9d; overflow: hidden; }
.scene { position: absolute; width: 100%; height: 100%; }
.axis { font-size: 5px; fill: #444; }
.vpname { position: absolute; left: 0; top: 0; height: 8px; padding: 0 2px 0 4px; background: #84a0bd; color: #111; }
.vpname b { padding-left: 1px; border-left: 1px solid #333; }
.vptabs { display: flex; gap: 1px; height: 9px; padding-left: 1px; }
.vptabs a { padding: 1px 3px; background: #cdd2e4; border-right: 1px solid #aab0c4; border-radius: 0 0 2px 2px; }
.vptabs .on { background: #fff; }

.panel { display: flex; flex-direction: column; width: 18%; max-width: 62px; margin-bottom: 2px; padding: 3px 1px 0 3px; }
.ptabs { display: flex; justify-content: space-between; height: 9px; background: #d3d9e6; overflow: hidden; }
.ptabs .icon { width: 9px; height: 9px; }
.ptabs .icon:first-child { background: #fff; }
.pbody { flex: 1; padding-top: 4px; background: #fff; }
.pbody h2 { height: 9px; padding: 1px 2px; border-bottom: 1px solid #e4e6ee; }
.row { display: flex; align-items: center; height: 8px; padding-left: 5px; border-bottom: 1px solid #e8eaf0; }
.row label, .row span { flex: 0 0 26px; }
.row input, .row select { flex: 1; width: 10px; height: 7px; }
.row select { background: linear-gradient(90deg, transparent 70%, #ddd 70%); }
.row button { flex: 1; height: 7px; background: #dcdcde; border: 1px solid #c4c4c8; line-height: 5px; }
.row.file button { flex: 0 0 7px; }
.row.off { color: #888; }
.row.off input { background: #dfe2ea; }
.osnap input, .row input[type="checkbox"] { flex: none; width: 5px; height: 5px; border: 1px solid #888; background: #fff; position: relative; }
input[type="checkbox"]:checked::before { content: ""; position: absolute; left: 1px; top: -1px; width: 2px; height: 3px; border: solid #333; border-width: 0 1px 1px 0; transform: rotate(40deg); }
.osnap input:disabled { border-color: #aaa; background: #e8e8e8; }
.osnap { display: flex; align-items: center; gap: 4px; height: 13px; padding-left: 3px; }
.osnap label { display: flex; align-items: center; gap: 1px; }
.status { display: flex; align-items: center; height: 9px; margin-top: 2px; border-top: 1px solid #b6bac6; color: #444; overflow: hidden; }
.status > * { border-right: 1px solid #b6bac6; padding: 0 2px; height: 8px; line-height: 8px; }
.status .world { width: 17px; padding: 0 1px; background: #d8ecf8; color: #111; font-weight: bold; }
.coord { flex: 0 0 30px; text-align: center; }
.layer { display: flex; align-items: center; gap: 1px; flex: 1; }
.layer i { width: 6px; height: 6px; background: #000; }
.status .on { font-weight: bold; color: #111; background: #d8ecf8; }

.gh { background: #f4f4f4; border-left: 2px solid #8e9096; }
.gh .title { padding: 0 5px 0 2px; }
.gh .menu { gap: 6px; height: 11px; padding: 0 3px 0 4px; color: #222; background: #f6f6f6; }
.gh .menu span { margin-left: auto; }
.gtabs { display: flex; height: 10px; padding-top: 1px; color: #777; background: #f0f0f0; }
.gtabs a { padding: 1px 3px; }
.gtabs .on { color: #222; background: #fff; border: 1px solid #aaa; border-bottom: 0; padding: 0 2px 0 1px; border-radius: 2px 2px 0 0; }
.ribbon { display: flex; align-items: flex-start; gap: 2px; height: 35px; border-bottom: 1px solid #aaa; background: linear-gradient(#d4d4d4, #efefef); }
.group { border: 1px solid #aaa; background: #d2d2d2; border-radius: 1px; }
.sets { display: flex; gap: 3px; }
.wide .sets { gap: 4px; }
.sets > div { display: grid; grid-template-rows: 12px 12px; grid-auto-flow: column; grid-auto-columns: 12px; align-items: center; justify-items: center; }
.group h2 { display: flex; height: 6px; background: #1c1c1c; color: #eee; }
.group h2 span { flex: 1; text-align: center; }
.gbar { display: flex; align-items: center; height: 14px; padding: 0 3px; gap: 3px; background: #f8f8f8; border-bottom: 1px solid #c8c8c8; }
.gbar > div { display: flex; gap: 2px; }
.gbar select { width: 29px; height: 10px; padding-left: 2px; border: 1px solid #aaa; background: #fff; }
.gbar .drop { gap: 7px; }
.gbar .right { margin-left: auto; }
.gbar .right .icon:last-child { outline: 1px solid #7ab6f0; }
.gbar .cut { padding-left: 3px; border-left: 1px solid #bbb; }
.canvas { position: relative; flex: 1; min-height: 0; background: #d4d0c8; }
.graph { position: absolute; left: 0; top: 0; width: 100%; height: 100%; }
.wire { fill: none; stroke: #4c4c48; stroke-width: .6; }
.w3 { stroke-width: 1.6; }
.g1 { fill: #b9a2e8; }
.g2 { fill: #ae90f6; stroke: #a184e4; stroke-width: 2; }
.n { fill: #8c8a9c; stroke: #4a4a5c; stroke-width: 1; }
.l { fill: #d2cfda; stroke: #66667a; stroke-width: 1; }
.d { fill: #2c2c34; }
.fine .n { stroke-width: .5; }
.line { stroke: #444; stroke-width: 1; }
.note { position: absolute; display: flex; align-items: center; justify-content: center; text-align: center; white-space: normal; border-radius: 6px; background: #ff0; color: #111; font: 14px/18px Lato, Carlito, sans-serif; }
.material { left: 153px; top: -7px; width: 72px; height: 37px; }
.data { left: 275px; top: 37px; width: 112px; height: 38px; }
.load { left: 9px; top: 93px; width: 80px; height: 37px; padding: 0 20px; }
.force { left: 130px; top: 207px; width: 72px; height: 37px; padding: 0 16px; }
.solver { left: 286px; top: 249px; width: 84px; height: 80px; padding: 0 12px; border-radius: 12px; }
.gstatus { display: flex; align-items: center; gap: 1px; height: 9px; padding: 0 5px 0 1px; background: #fff; color: #444; }
.gstatus i { width: 6px; height: 6px; border-radius: 50%; background: #2c78c0; }
.gstatus em { margin-left: auto; font-style: normal; color: #999; }
```
FILE: script.js
```js
// Fills every toolbar with buttons from its list of symbol names.
document.querySelectorAll('[data-icons]').forEach(bar => {
  bar.dataset.icons.split(' ').forEach(name => {
    bar.insertAdjacentHTML('beforeend',
      `<button type="button" class="icon" aria-label="${name}"><svg><use href="#${name}"/></svg></button>`);
  });
});

// Ground plane: two fans of lines, each towards its own vanishing point.
const origin = [165.6, 219.4];
const vanish = [[-812, -40], [550, -10]];
const step = [0.0167, 0.0297];
const lines = [];
[0, 1].forEach(axis => {
  const from = vanish[1 - axis];
  for (let i = -32; i < 60; i++) {
    const w = step[axis] * i;
    if (1 + w < 0.1) continue;
    const p = [0, 1].map(k => (origin[k] + w * vanish[axis][k]) / (1 + w));
    const q = [0, 1].map(k => from[k] + (p[k] - from[k]) * 4);
    const tone = i % 5 ? '#94979b' : '#85878b';
    lines.push(`<path d="M${from}L${q}" stroke="${tone}" stroke-width="${i % 5 ? 0.4 : 0.6}"/>`);
  }
});
document.getElementById('gridlines').innerHTML = lines.join('');
```
